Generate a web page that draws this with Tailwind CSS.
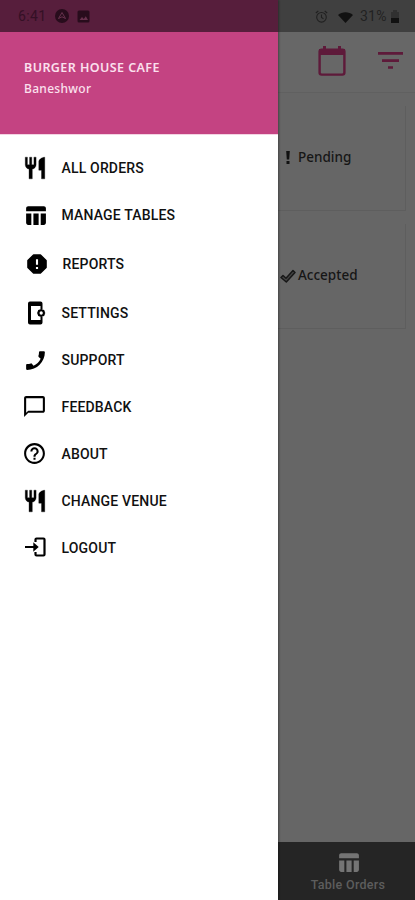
<!DOCTYPE html>
<html lang="en">
<head>
<meta charset="utf-8">
<title>Burger House Cafe</title>
<script src="https://cdn.jsdelivr.net/npm/@tailwindcss/browser@4"></script>
</head>
<body class="bg-[#666]">
<svg class="hidden">
  <symbol id="fork" viewBox="0 0 24 24"><path d="M11 9H9V2H7v7H5V2H3v7c0 2.120 1.660 3.840 3.500 3.970V22h3v-9.030C11.340 12.840 13 11.120 13 9V2h-2v7zm4.500-3v8H18v8h3V2c-2.760 0-5.500 2.240-5.500 4z" stroke="#000" stroke-width=".3"/></symbol>
  <symbol id="table" viewBox="0 0 24 24"><path d="M10 10h5v11h-5zM17 21h3c1.100 0 2-.9 2-2v-9h-5v11zm3-18H5c-1.100 0-2 .9-2 2v3h19V5c0-1.100-.9-2-2-2zM3 19c0 1.100.9 2 2 2h3V10H3v9z"/></symbol>
</svg>
<div class="flex h-[900px] w-[415px] overflow-hidden font-['Roboto',sans-serif]">
  <aside class="relative z-10 flex w-[278px] shrink-0 flex-col bg-white shadow-[1px_0_2px_rgba(0,0,0,0.35)]">
    <div class="flex h-8 items-center bg-[#571e3c] pl-[18px] text-[#341025]">
      <span class="w-[37px] text-[14px] tracking-[0.4px]">6:41</span>
      <svg class="size-[14px]" viewBox="0 0 14 14"><circle cx="7" cy="7" r="7" fill="#280c1c"/><path d="M3.500 9.500 7 3.500l3.500 6L7 7.800z" fill="none" stroke="#67314d" stroke-width="1"/></svg>
      <svg class="ml-2 size-[13px]" viewBox="0 0 13 13"><rect x=".5" y=".5" width="12" height="12" rx="1.500" fill="#280c1c"/><path d="m2.500 10 2.500-3 1.800 2 2-2.800L11 10z" fill="#67314d"/></svg>
    </div>
    <header class="flex h-[102px] flex-col bg-[#c44382] pl-6 pt-[26px] font-['Noto_Sans',sans-serif] text-[#fbe0ee]">
      <h1 class="whitespace-nowrap text-[12.500px] font-semibold leading-5 tracking-[0.420px]">BURGER HOUSE CAFE</h1>
      <p class="text-[12px] font-medium leading-[21px] tracking-[0.3px]">Baneshwor</p>
    </header>
    <nav class="flex flex-col border-t border-[#f3d3e2] pl-6 pt-[10px] text-[14px] font-medium tracking-[0.170px] text-[#111]">
      <a class="flex h-[47px] items-center"><span class="w-[37.500px]"><svg class="-ml-[2px] -mt-px size-[26px]" fill="#000"><use href="#fork"/></svg></span>ALL ORDERS</a>
      <a class="flex h-[47px] items-center"><span class="w-[37.500px]"><svg class="-ml-[1.500px] -mt-px size-[25px]" fill="#000"><use href="#table"/></svg></span>MANAGE TABLES</a>
      <a class="flex h-[50px] items-center"><span class="w-[38.500px]"><svg class="ml-[2.500px] size-[20px]" viewBox="0 0 20 20"><path d="M6.600 1h6.800L19 6.600v6.800L13.400 19H6.600L1 13.400V6.600z" stroke="#000" stroke-width="1.600" stroke-linejoin="round"/><path d="M10 5.200v5.600m0 2.200v2" stroke="#fff" stroke-width="2.100"/></svg></span><span class="pt-px">REPORTS</span></a>
      <a class="flex h-[48px] items-center"><span class="w-[37.500px]"><svg class="ml-1 h-[24px] w-[18px]" viewBox="0 0 18 24"><path d="M2 .5h10.500a2 2 0 0 1 2 2V8h-2V5H3v14h9.500v-3h2v5.500a2 2 0 0 1-2 2H2a2 2 0 0 1-2-2v-19a2 2 0 0 1 2-2z"/><circle cx="13.200" cy="12" r="2.700" fill="none" stroke="#000" stroke-width="2.100"/><path d="M13.200 8v1m0 6v1M9.200 12h.8m6.400 0h.8M10.400 9.200l.7.700m4.200 4.200.7.700m-5.600 0 .7-.7m4.200-4.200.7-.7" stroke="#000" stroke-width="1.200"/></svg></span>SETTINGS</a>
      <a class="flex h-[47px] items-center"><span class="w-[37.500px]"><svg class="-ml-px -mt-px size-[25px] -scale-x-100" viewBox="0 0 24 24"><path d="M20.010 15.380c-1.230 0-2.420-.2-3.530-.56a.977.977 0 0 0-1.010.24l-1.570 1.970c-2.830-1.350-5.480-3.900-6.890-6.830l1.950-1.660c.27-.28.35-.67.24-1.020-.37-1.110-.56-2.300-.56-3.530 0-.54-.45-.99-.99-.99H4.190C3.650 3 3 3.240 3 3.990 3 13.280 10.730 21 20.010 21c.71 0 .99-.63.990-1.180v-3.450c0-.54-.45-.99-.99-.99z"/></svg></span>SUPPORT</a>
      <a class="flex h-[47px] items-center"><span class="w-[37.500px]"><svg class="-ml-[2px] -mt-[3px] size-[25px]" viewBox="0 0 24 24"><path d="M20 2H4c-1.100 0-2 .9-2 2v18l4-4h14c1.100 0 2-.9 2-2V4c0-1.100-.9-2-2-2zm0 14H6l-2 2V4h16v12z"/></svg></span>FEEDBACK</a>
      <a class="flex h-[47px] items-center"><span class="w-[37.500px]"><svg class="-ml-[2px] -mt-[2px] size-[25px]" viewBox="0 0 24 24"><path d="M11 18h2v-2h-2v2zm1-16C6.480 2 2 6.480 2 12s4.480 10 10 10 10-4.480 10-10S17.520 2 12 2zm0 18c-4.410 0-8-3.590-8-8s3.590-8 8-8 8 3.590 8 8-3.590 8-8 8zm0-14c-2.210 0-4 1.790-4 4h2c0-1.100.9-2 2-2s2 .9 2 2c0 2-3 1.750-3 5h2c0-2.250 3-2.500 3-5 0-2.210-1.790-4-4-4z"/></svg></span>ABOUT</a>
      <a class="flex h-[47px] items-center"><span class="w-[37.500px]"><svg class="-ml-[2px] -mt-0.5 size-[26px]" fill="#000"><use href="#fork"/></svg></span>CHANGE VENUE</a>
      <a class="flex h-[46px] items-center"><span class="w-[37.500px]"><svg class="ml-px -mt-[2px] h-5 w-[21px]" viewBox="0 0 21 20" fill="none" stroke="#000" stroke-width="2.200"><path d="M10.500 5V2.500a1 1 0 0 1 1-1h7a1 1 0 0 1 1 1v15a1 1 0 0 1-1 1h-7a1 1 0 0 1-1-1V15M0 10h11"/><path d="m8.300 5.200 5.400 4.800-5.400 4.800z" fill="#000" stroke="none"/></svg></span>LOGOUT</a>
    </nav>
  </aside>
  <main class="flex w-[137px] shrink-0 flex-col bg-[#666]">
    <div class="flex h-8 items-center bg-[#404040] pl-[37px] text-[#222]">
      <svg class="size-[13px]" viewBox="0 0 13 13" fill="none" stroke="#202020" stroke-width="1.100"><circle cx="6.500" cy="7.300" r="4.800"/><path d="M6.500 4.500v3l2 1.200M.8 3l2.500-2m6.400 0 2.500 2"/></svg>
      <svg class="ml-[10px] mt-[3px] h-[11px] w-[15px]" viewBox="0 0 15 11"><path d="M0 3C4-.7 11-.7 15 3l-7.500 8z" fill="#111"/></svg>
      <span class="ml-[7px] w-[31px] text-[14px] tracking-[0.2px]">31%</span>
      <svg class="h-[13px] w-2" viewBox="0 0 8 13"><path d="M0 2h2V0h4v2h2v6H0z" fill="#303030"/><path d="M0 8h8v5H0z" fill="#111"/></svg>
    </div>
    <div class="flex h-[61px] items-start border-b border-[#606060] bg-[#676767] pl-10 pt-[13px]">
      <svg class="h-[32px] w-[28px]" viewBox="0 0 28 32"><rect x="1.600" y="4.600" width="24.800" height="25" rx="2" fill="none" stroke="#5e1a3a" stroke-width="2.400"/><path d="M1 4h26v6H1zM5 1h3v4H5zm15 0h3v4h-3z" fill="#5e1a3a"/></svg>
      <svg class="ml-8 mt-[7px] h-[18px] w-[25px]" viewBox="0 0 25 18"><path d="M0 0h25v2.700H0zm4 7.200h17v2.700H4zm6 7h5v2.600h-5z" fill="#5e1a3a"/></svg>
    </div>
    <section class="mt-[13px] flex flex-col gap-[13px] pr-[9px]">
      <div class="flex h-[105px] items-center border-b border-r border-[#5e5e5e] pb-px pl-[7px] text-[#161616]">
        <svg class="h-[13px] w-[6px]" viewBox="0 0 6 13"><path d="M1.200 0h3.600l-.6 8.500H1.800zM1.500 10h3v3h-3z" fill="#111"/></svg>
        <span class="ml-[7px] font-['Noto_Sans',sans-serif] text-[13.500px] font-medium">Pending</span>
      </div>
      <div class="flex h-[105px] items-center border-b border-r border-[#5e5e5e] pb-px pl-[2px] text-[#161616]">
        <svg class="h-[14px] w-[16px]" viewBox="0 0 16 14"><path d="m1 8.500 2-2 3 2.700L13 1.500l2 2L6.300 13z" fill="#444" stroke="#171717" stroke-width="1.500" stroke-linejoin="round"/></svg>
        <span class="ml-[2px] font-['Noto_Sans',sans-serif] text-[13.500px] font-medium">Accepted</span>
      </div>
    </section>
    <footer class="mt-auto flex h-[58px] flex-col items-center bg-[#252525] pl-[3px] pt-[8px] text-[#5d5d5d]">
      <svg class="size-[25px]" fill="#747474"><use href="#table"/></svg>
      <span class="mt-[1px] whitespace-nowrap text-[12.500px] font-medium leading-[18px] tracking-[0.3px]">Table Orders</span>
    </footer>
  </main>
</div>
</body>
</html>
